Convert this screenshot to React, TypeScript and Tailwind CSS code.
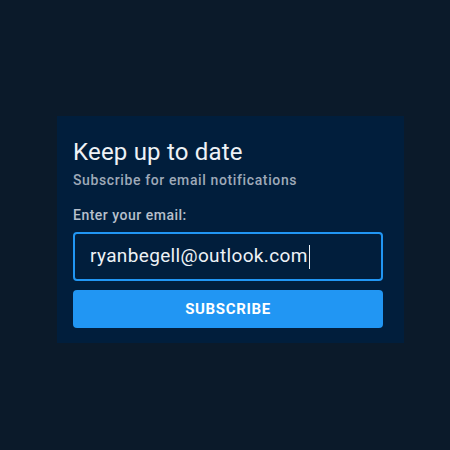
import React from "react";

export default function App() {
  return (
    <div
      className="w-[450px] h-[450px] bg-[#0b1a2a] flex flex-col items-start pt-[116px] pl-[57px]"
      style={{ fontFamily: "Roboto, 'Liberation Sans', sans-serif" }}
    >
      <div className="w-[347px] h-[227px] bg-[#011e3c] pl-4 pr-[21px] pt-[21px] flex flex-col">
        <h1 className="text-[24px] leading-[30px] text-[#eef2f6] font-normal tracking-[0.2px]">Keep up to date</h1>
        <p className="text-[14px] leading-[20px] text-[#9ea9b8] font-medium tracking-[0.62px] mt-[3px]">
          Subscribe for email notifications
        </p>
        <label className="text-[14px] leading-[20px] text-[#b7c0cc] font-medium tracking-[0.5px] mt-[15px]">
          Enter your email:
        </label>
        <div className="mt-[7px] h-[49px] shrink-0 border-2 border-[#2196f3] rounded-[4px] flex items-center pl-[15px]">
          <span className="text-[19px] text-[#eef2f6] tracking-[0.35px]">ryanbegell@outlook.com</span>
          <span className="w-px h-[24px] bg-[#eef2f6] ml-[1px]" />
        </div>
        <button className="mt-[9px] h-[38px] shrink-0 w-full rounded-[4px] bg-[#2196f3] text-white font-bold text-[15px] tracking-[0.65px] uppercase">
          Subscribe
        </button>
      </div>
    </div>
  );
}
